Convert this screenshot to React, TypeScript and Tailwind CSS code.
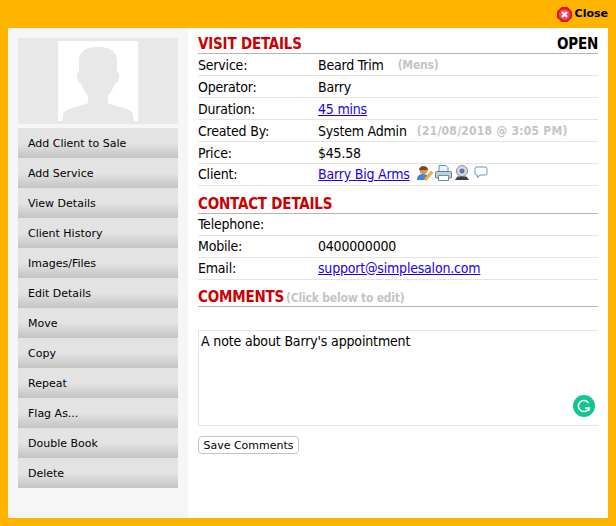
import React from 'react';

const menuItems = [
  'Add Client to Sale',
  'Add Service',
  'View Details',
  'Client History',
  'Images/Files',
  'Edit Details',
  'Move',
  'Copy',
  'Repeat',
  'Flag As...',
  'Double Book',
  'Delete',
];

const condensed = "font-['DejaVu_Sans_Condensed','DejaVu_Sans',sans-serif] font-stretch-condensed";

function Row({ label, children, tight }: { label: string; children?: React.ReactNode; tight?: boolean }) {
  return (
    <div className={`flex h-[22px] items-center border-b border-[#e4e4e4] ${tight ? '' : 'pt-[1px]'} text-[14px] tracking-[-0.2px] text-black ${condensed}`}>
      <div className="w-[120px] shrink-0">{label}</div>
      <div className="flex items-center">{children}</div>
    </div>
  );
}

function Heading({ title, note, right }: { title: string; note?: string; right?: string }) {
  return (
    <div className={`flex h-[20px] items-center justify-between border-b border-[#b5b5b5] pt-[2px] ${condensed}`}>
      <div className="flex items-baseline gap-[2px]">
        <span className="text-[15px] font-bold tracking-[-0.2px] text-[#cc0000]">{title}</span>
        {note && <span className="text-[12px] font-bold tracking-[-0.2px] text-[#c4c4c4]">{note}</span>}
      </div>
      {right && <span className="text-[15px] font-bold tracking-[-0.2px] text-black">{right}</span>}
    </div>
  );
}

export default function App() {
  return (
    <div className="h-[526px] w-[616px] overflow-hidden bg-[#ffb400] px-2 font-['DejaVu_Sans',sans-serif]">
      <div className="flex h-[28px] items-center justify-end gap-[3px]">
        <svg width="15" height="15" viewBox="0 0 15 15">
          <path d="M4.500 0h6L15 4.500v6L10.500 15h-6L0 10.500v-6z" fill="#e8112d" />
          <circle cx="7.500" cy="7.500" r="5.500" fill="#f4465a" />
          <path d="M5 5l5 5M10 5l-5 5" stroke="#fff" strokeWidth="2.400" />
        </svg>
        <span className="text-[11px] font-bold text-black">Close</span>
      </div>
      <div className="flex h-[490px] bg-white">
        <div className="h-full w-[180px] bg-[#f6f6f6] p-[10px]">
          <div className="flex h-[86px] items-center justify-center bg-[#e8e8e8]">
            <div className="h-[80px] w-[80px] bg-white">
              <svg width="80" height="80" viewBox="0 0 80 80">
                <path
                  d="M40 6C28 6 21 10 21 20v11c-2 0-2.500 3-2 6 .5 3 2 6 4.500 6 1.500 5 3.500 9 6.500 12v7c-6 3-19 5-23 8-2 2-2.500 5-2.500 10h71c0-5-.5-8-2.500-10-4-3-17-5-23-8v-7c3-3 5-7 6.500-12 2.500 0 4-3 4.500-6 .5-3 0-6-2-6V20c0-10-7-14-19-14z"
                  fill="#e8e8e8"
                />
              </svg>
            </div>
          </div>
          <div className="mt-[4px]">
            {menuItems.map((item) => (
              <div
                key={item}
                className="flex h-[30px] items-center bg-gradient-to-b from-[#e3e3e3] from-50% to-[#c4c4c4] pl-[10px] pt-[2px] text-[11px] text-black"
              >
                {item}
              </div>
            ))}
          </div>
        </div>
        <div className="box-content w-[400px] pl-[10px] pt-[6px]">
          <Heading title="VISIT DETAILS" right="OPEN" />
          <Row label="Service:">
            Beard Trim
            <span className="ml-[14px] text-[12px] font-bold text-[#c4c4c4]">(Mens)</span>
          </Row>
          <Row label="Operator:">Barry</Row>
          <Row label="Duration:">
            <a href="#" className="text-[#2200ee] underline">45 mins</a>
          </Row>
          <Row label="Created By:">
            System Admin
            <span className="ml-[10px] text-[12px] font-bold tracking-[0.25px] text-[#c4c4c4]">(21/08/2018 @ 3:05 PM)</span>
          </Row>
          <Row label="Price:">$45.58</Row>
          <Row label="Client:" tight>
            <a href="#" className="text-[#2200ee] underline">Barry Big Arms</a>
            <span className="ml-[7px] -mt-[3px] flex items-center gap-[2px]">
              <svg width="16" height="16" viewBox="0 0 16 16">
                <circle cx="6.500" cy="5" r="4" fill="#d8904a" />
                <path d="M2 5c0-5 9-5 9 0z" fill="#7a4a1e" />
                <path d="M0 15c0-5 3-6 6-6s5 1 5 3l-2 3z" fill="#3f86d8" />
                <path d="M7 14l7-8 2 2-7 7.500z" fill="#f2b632" stroke="#c98a1e" strokeWidth=".5" />
              </svg>
              <svg width="17" height="16" viewBox="0 0 17 16">
                <path d="M4 .5h7l2 2v6H4z" fill="#eaf3fc" stroke="#4d94d8" />
                <rect x=".5" y="6.500" width="16" height="6.500" rx="1" fill="#c9ced4" stroke="#6f7780" />
                <rect x="3.500" y="10.500" width="10" height="5" fill="#fff" stroke="#5d93cc" />
              </svg>
              <svg width="16" height="16" viewBox="0 0 16 16">
                <circle cx="8" cy="6" r="5.500" fill="#d9dadd" stroke="#8a8c92" />
                <circle cx="8" cy="6" r="2.500" fill="#5b78b8" />
                <path d="M3.500 11.500h9l2.500 3.500H1z" fill="#3e3f44" />
              </svg>
              <svg className="ml-[2px]" width="14" height="14" viewBox="0 0 14 14">
                <path d="M3 1h8a2 2 0 0 1 2 2v4a2 2 0 0 1-2 2H6l-2.500 3V9H3a2 2 0 0 1-2-2V3a2 2 0 0 1 2-2z" fill="#fff" stroke="#5c9ad8" />
              </svg>
            </span>
          </Row>
          <div className="mt-[8px]">
            <Heading title="CONTACT DETAILS" />
          </div>
          <Row label="Telephone:" tight />
          <Row label="Mobile:" tight>0400000000</Row>
          <Row label="Email:" tight>
            <a href="#" className="text-[#2200ee] underline">support@simplesalon.com</a>
          </Row>
          <div className="mt-[7px]">
            <Heading title="COMMENTS" note="(Click below to edit)" />
          </div>
          <div className={`relative mt-[23px] h-[96px] border-y border-l border-[#e4e4e4] px-[2px] text-[14px] tracking-[-0.15px] text-black ${condensed}`}>
            A note about Barry's appointment
            <svg className="absolute right-[3px] bottom-[8px]" width="22" height="22" viewBox="0 0 22 22">
              <circle cx="11" cy="11" r="11" fill="#11c692" />
              <path d="M15.500 8a5.500 5.500 0 1 0 .5 5h-4M16 13v3" fill="none" stroke="#fff" strokeWidth="1.600" />
            </svg>
          </div>
          <button className="mt-[10px] h-[18px] w-[101px] rounded-[4px] border border-[#c4c4c4] bg-white pt-[1px] text-[11px] text-black">
            Save Comments
          </button>
        </div>
      </div>
    </div>
  );
}
